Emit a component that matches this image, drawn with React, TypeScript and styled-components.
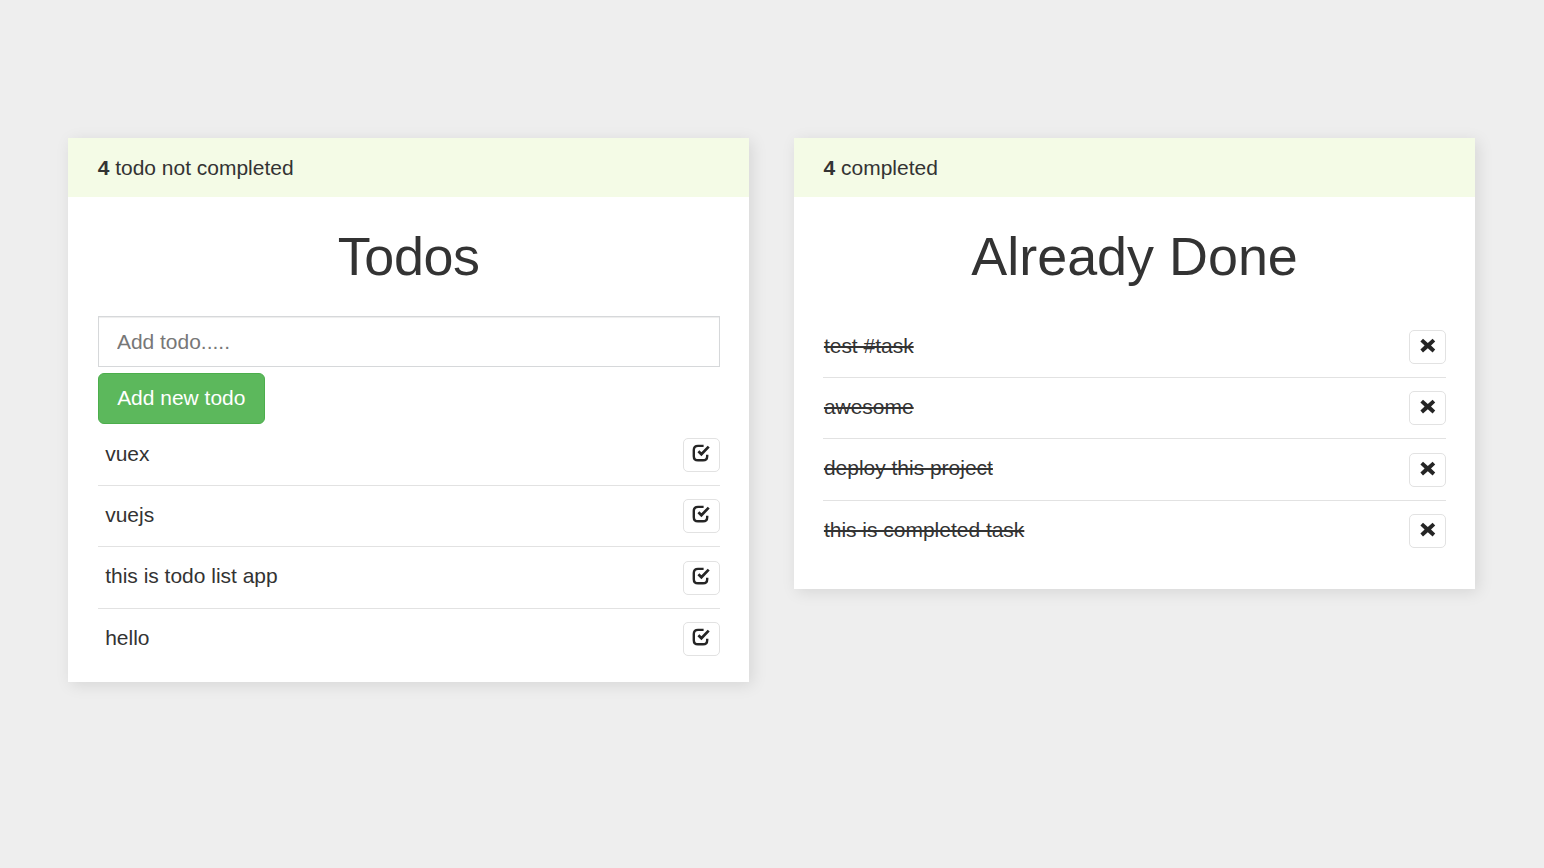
import React from "react";
import styled, { createGlobalStyle } from "styled-components";

const GlobalStyle = createGlobalStyle`
  * { box-sizing: border-box; }
  body {
    margin: 0;
    background: #eee;
    color: #333;
    font-family: "Liberation Sans", Arial, sans-serif;
    font-size: 20.97px;
    line-height: 30px;
  }
`;

const Page = styled.main`
  display: flex;
  align-items: flex-start;
  gap: 44.5px;
  min-height: 868px;
  padding: 138px 68px 0;
`;

const Card = styled.section<{ $bottom: number }>`
  flex: none;
  width: 681.4px;
  padding-bottom: ${(p) => p.$bottom}px;
  background: #fff;
  box-shadow: 3px 3px 15px rgba(0, 0, 0, 0.1);
`;

const Status = styled.header`
  height: 59.4px;
  padding: 14.9px 29.7px 0;
  background: #f4fbe6;
`;

const Body = styled.div`
  padding: 29.9px 29.5px 0;
`;

const Title = styled.h1<{ $tight?: boolean }>`
  margin: 0 0 30.2px;
  font-size: 53.9px;
  font-weight: 400;
  line-height: 59px;
  letter-spacing: ${(p) => (p.$tight ? "-0.4px" : "normal")};
  text-align: center;
`;

const TodoInput = styled.input`
  display: block;
  width: 100%;
  height: 50.5px;
  padding: 0 18.4px;
  border: 1.5px solid #d6d8da;
  border-radius: 0;
  background: #fff;
  box-shadow: inset 0 1px 1px rgba(0, 0, 0, 0.075);
  color: #555;
  font: inherit;
  &::placeholder { color: #777; opacity: 1; }
`;

const AddButton = styled.button`
  display: block;
  width: 167.5px;
  height: 51px;
  margin-top: 6px;
  padding: 0 0 1.5px;
  border: 1px solid #4cae4c;
  border-radius: 6px;
  background: #5cb85c;
  color: #fff;
  font: inherit;
  white-space: nowrap;
`;

const List = styled.ul<{ $offset?: number }>`
  margin: 0;
  padding: ${(p) => p.$offset ?? 0}px 0 0;
  list-style: none;
`;

const Row = styled.li`
  display: flex;
  align-items: flex-start;
  justify-content: space-between;
  height: 61.3px;
  padding-top: 13.3px;
  border-bottom: 1.5px solid #e2e2e2;
  &:last-child { border-bottom: 0; }
`;

const Label = styled.span<{ $done?: boolean }>`
  margin-top: 0.9px;
  margin-left: ${(p) => (p.$done ? 0.5 : 7.7)}px;
  text-decoration: ${(p) => (p.$done ? "line-through 2px" : "none")};
`;

const IconButton = styled.button`
  display: flex;
  align-items: flex-start;
  justify-content: center;
  width: 36.5px;
  height: 34px;
  padding: 5px 1px 0 0;
  border: 1.5px solid #e2e2e2;
  border-radius: 5px;
  background: #fff;
  color: #252525;
`;

const CheckIcon = () => (
  <svg width="18" height="18" viewBox="0 0 18 18" fill="none" stroke="currentColor">
    <path d="M11.6 1.9H6Q1.8 1.9 1.8 6v6.2q0 4.1 4.2 4.1h5q4.2 0 4.2-4.1v-1.5" strokeWidth="2.4" />
    <path d="M6.4 7.3l3 3 7.3-7.7" strokeWidth="2.7" />
  </svg>
);

const RemoveIcon = () => (
  <svg width="18" height="18" viewBox="0 0 18 18" fill="currentColor">
    <path d="M5 2.8 L9.8 6.9 L14.6 2.8 L17.2 5.6 L13 9.6 L17.2 13.6 L14.6 16.4 L9.8 12.3 L5 16.4 L2.4 13.6 L6.6 9.6 L2.4 5.6Z" />
  </svg>
);

const todos = ["vuex", "vuejs", "this is todo list app", "hello"];
const completed = ["test #task", "awesome", "deploy this project", "this is completed task"];

export default function App() {
  return (
    <>
      <GlobalStyle />
      <Page>
        <Card $bottom={12.5}>
          <Status><strong>4</strong> todo not completed</Status>
          <Body>
            <Title $tight>Todos</Title>
            <TodoInput placeholder="Add todo....." />
            <AddButton>Add new todo</AddButton>
            <List $offset={0.7}>
              {todos.map((todo) => (
                <Row key={todo}>
                  <Label>{todo}</Label>
                  <IconButton aria-label="Complete"><CheckIcon /></IconButton>
                </Row>
              ))}
            </List>
          </Body>
        </Card>
        <Card $bottom={27.2}>
          <Status><strong>4</strong> completed</Status>
          <Body>
            <Title>Already Done</Title>
            <List $offset={0.2}>
              {completed.map((todo) => (
                <Row key={todo}>
                  <Label $done>{todo}</Label>
                  <IconButton aria-label="Remove"><RemoveIcon /></IconButton>
                </Row>
              ))}
            </List>
          </Body>
        </Card>
      </Page>
    </>
  );
}
